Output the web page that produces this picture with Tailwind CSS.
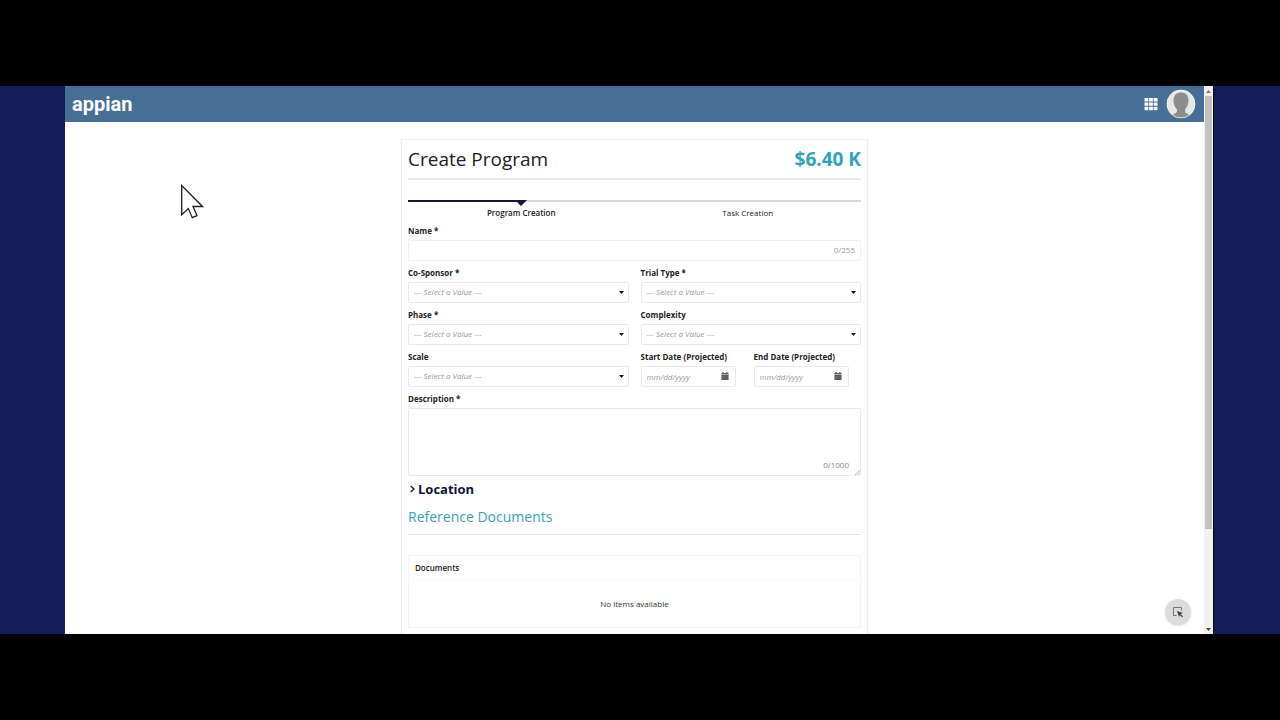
<!DOCTYPE html>
<html lang="en">
<head>
  <meta charset="UTF-8" />
  <meta name="viewport" content="width=device-width,initial-scale=1" />
  <title>Appian – Create Program</title>
  <script src="https://cdn.jsdelivr.net/npm/@tailwindcss/browser@4"></script>
</head>
<body class="h-screen flex flex-col bg-black py-[86px] font-['Open_Sans',sans-serif] text-[#222]">

  <div class="flex-1 min-h-0 flex bg-[#131d5a] pl-16 pr-[66px]">
    <div class="relative flex-1 min-w-0 flex overflow-hidden border-l border-l-[#131d5a] border-r border-r-black bg-white">

      <div class="flex-1 min-w-0 flex flex-col">
        <!-- NAV -->
        <header class="shrink-0 h-9 flex items-center justify-between bg-[#476f96] pl-[7px] pr-2">
          <a href="#" class="font-['Roboto',sans-serif] text-[20px] leading-6 font-bold text-white">appian</a>
          <div class="flex items-center gap-2">
            <button aria-label="Apps">
              <svg class="block w-[14px] h-[14px]" viewBox="0 0 14 14" fill="#fff">
                <path d="M.5 1h3.800v3.400H.5zM5.100 1h3.800v3.400H5.100zM9.700 1h3.800v3.400H9.700zM.5 5.400h3.800v3.400H.5zM5.100 5.400h3.800v3.400H5.100zM9.700 5.400h3.800v3.400H9.700zM.5 9.800h3.800v3.400H.5zM5.100 9.800h3.800v3.400H5.100zM9.700 9.800h3.800v3.400H9.700z"/>
              </svg>
            </button>
            <button aria-label="User menu">
              <svg class="block w-[30px] h-[30px]" viewBox="0 0 30 30">
                <defs><clipPath id="avatar"><circle cx="15" cy="15" r="13.6"/></clipPath></defs>
                <circle cx="15" cy="15" r="14.3" fill="#fff"/>
                <circle cx="15" cy="15" r="13.6" fill="#e4e6e8"/>
                <path clip-path="url(#avatar)" d="M15 3.600c4.900 0 7.700 3.200 7.500 8.200 0 3.600-1.400 6.500-3.400 8.400v2.200c0 1.300 2.600 2.200 4.600 3.600V30H6.300v-4c2-1.400 4.600-2.300 4.600-3.600v-2.200c-2-1.900-3.400-4.800-3.400-8.400-.2-5 2.600-8.200 7.500-8.200z" fill="#8d8d8d"/>
              </svg>
            </button>
          </div>
        </header>

        <!-- FORM -->
        <main class="flex-1 min-h-0 overflow-hidden px-4 pt-[17px]">
          <form class="mx-auto max-w-[467px] border border-[#ececec] px-[6px] pb-4 shadow-xs">
            <div class="flex items-center justify-between h-[38px]">
              <h1 class="text-[19px] leading-6">Create Program</h1>
              <p class="text-[19px] leading-6 font-bold text-[#2ea3bb]">$6.40 K</p>
            </div>
            <div class="h-[2px] bg-[#e8e8e8]"></div>

            <!-- milestone bar -->
            <div class="mt-5 relative h-[2px] bg-[#d9d9d9]">
              <div class="h-full w-1/4 bg-[#111638]"></div>
              <svg class="absolute left-1/4 top-0 -ml-[6px] w-3 h-[6px]" viewBox="0 0 12 6" fill="#111638"><path d="M0 0h12L6 6z"/></svg>
            </div>
            <ol class="mt-1 mb-[3px] grid grid-cols-2 text-center text-[8px] leading-[14px]">
              <li class="font-semibold">Program Creation</li>
              <li>Task Creation</li>
            </ol>

            <div class="grid grid-cols-2 gap-x-3 gap-y-1 text-[8px] leading-4">
              <div class="col-span-2">
                <label for="name" class="block mb-px font-bold">Name *</label>
                <div class="relative">
                  <input id="name" type="text" class="block w-full h-[21px] border border-[#f0f0f0] rounded-xs px-[5px]" />
                  <span class="absolute right-[6px] top-[2px] text-[#999]">0/255</span>
                </div>
              </div>

              <div>
                <label for="sponsor" class="block mb-px font-bold">Co-Sponsor *</label>
                <div class="relative">
                  <select id="sponsor" class="block w-full h-[21px] appearance-none border border-[#e9e9e9] rounded-xs px-[5px] pb-px italic text-[#999]"><option>--- Select a Value ---</option></select>
                  <svg class="absolute right-[5px] top-[9px] w-[5px] h-[3px] pointer-events-none" viewBox="0 0 5 3" fill="#111"><path d="M0 0h5L2.500 3z"/></svg>
                </div>
              </div>
              <div>
                <label for="trial" class="block mb-px font-bold">Trial Type *</label>
                <div class="relative">
                  <select id="trial" class="block w-full h-[21px] appearance-none border border-[#e9e9e9] rounded-xs px-[5px] pb-px italic text-[#999]"><option>--- Select a Value ---</option></select>
                  <svg class="absolute right-[5px] top-[9px] w-[5px] h-[3px] pointer-events-none" viewBox="0 0 5 3" fill="#111"><path d="M0 0h5L2.500 3z"/></svg>
                </div>
              </div>

              <div>
                <label for="phase" class="block mb-px font-bold">Phase *</label>
                <div class="relative">
                  <select id="phase" class="block w-full h-[21px] appearance-none border border-[#e9e9e9] rounded-xs px-[5px] pb-px italic text-[#999]"><option>--- Select a Value ---</option></select>
                  <svg class="absolute right-[5px] top-[9px] w-[5px] h-[3px] pointer-events-none" viewBox="0 0 5 3" fill="#111"><path d="M0 0h5L2.500 3z"/></svg>
                </div>
              </div>
              <div>
                <label for="complexity" class="block mb-px font-bold">Complexity</label>
                <div class="relative">
                  <select id="complexity" class="block w-full h-[21px] appearance-none border border-[#e9e9e9] rounded-xs px-[5px] pb-px italic text-[#999]"><option>--- Select a Value ---</option></select>
                  <svg class="absolute right-[5px] top-[9px] w-[5px] h-[3px] pointer-events-none" viewBox="0 0 5 3" fill="#111"><path d="M0 0h5L2.500 3z"/></svg>
                </div>
              </div>

              <div>
                <label for="scale" class="block mb-px font-bold">Scale</label>
                <div class="relative">
                  <select id="scale" class="block w-full h-[21px] appearance-none border border-[#e9e9e9] rounded-xs px-[5px] pb-px italic text-[#999]"><option>--- Select a Value ---</option></select>
                  <svg class="absolute right-[5px] top-[9px] w-[5px] h-[3px] pointer-events-none" viewBox="0 0 5 3" fill="#111"><path d="M0 0h5L2.500 3z"/></svg>
                </div>
              </div>
              <div class="flex gap-[18px]">
                <div class="w-[95px]">
                  <label for="start" class="block mb-px font-bold whitespace-nowrap">Start Date (Projected)</label>
                  <div class="relative">
                    <input id="start" type="text" placeholder="mm/dd/yyyy" class="block w-full h-[21px] border border-[#e9e9e9] rounded-xs px-[5px] pb-px placeholder:italic placeholder:text-[#999]" />
                    <svg class="absolute right-[7px] top-[6px] w-2 h-2" viewBox="0 0 8 8" fill="#5c5c5c"><path d="M1.500 0h1.200v.9h2.600V0h1.200v.9H7.600v1.300H.4V.9h1.100zM.4 2.700h7.200V8H.4z"/><path d="M1.500 4.400h5M1.500 6.200h5" stroke="#8a8a8a" stroke-width=".7" stroke-dasharray="1 1"/></svg>
                  </div>
                </div>
                <div class="w-[95px]">
                  <label for="end" class="block mb-px font-bold whitespace-nowrap">End Date (Projected)</label>
                  <div class="relative">
                    <input id="end" type="text" placeholder="mm/dd/yyyy" class="block w-full h-[21px] border border-[#e9e9e9] rounded-xs px-[5px] pb-px placeholder:italic placeholder:text-[#999]" />
                    <svg class="absolute right-[7px] top-[6px] w-2 h-2" viewBox="0 0 8 8" fill="#5c5c5c"><path d="M1.500 0h1.200v.9h2.600V0h1.200v.9H7.600v1.300H.4V.9h1.100zM.4 2.700h7.200V8H.4z"/><path d="M1.500 4.400h5M1.500 6.200h5" stroke="#8a8a8a" stroke-width=".7" stroke-dasharray="1 1"/></svg>
                  </div>
                </div>
              </div>

              <div class="col-span-2">
                <label for="description" class="block mb-px font-bold">Description *</label>
                <div class="relative">
                  <textarea id="description" class="block w-full h-[68px] resize-none border border-[#e9e9e9] rounded-xs px-[5px]"></textarea>
                  <span class="absolute right-3 bottom-[3px] text-[#888]">0/1000</span>
                  <svg class="absolute right-px bottom-px w-[5px] h-[5px]" viewBox="0 0 6 6" stroke="#888" stroke-width=".8"><path d="M0 6L6 0M3 6l3-3"/></svg>
                </div>
              </div>
            </div>

            <button type="button" class="mt-[3px] flex items-center gap-[3px] text-[13px] leading-5 font-bold text-[#111638]">
              <svg class="ml-0.5 w-[5px] h-2" viewBox="0 0 5 8" fill="none" stroke="#222" stroke-width="1.400"><path d="M.7 1l3.300 3-3.300 3"/></svg>
              Location
            </button>

            <h2 class="mt-2 pb-[7px] border-b border-[#e6e6e6] text-[14px] leading-5 text-[#3a9fb0]">Reference Documents</h2>

            <table class="mt-5 w-full border border-[#f5f5f5] text-[8px] leading-4">
              <thead>
                <tr class="border-b border-[#fafafa]"><th class="h-6 px-[6px] text-left font-semibold">Documents</th></tr>
              </thead>
              <tbody>
                <tr><td class="h-12 text-center text-[#333]">No items available</td></tr>
              </tbody>
            </table>
          </form>
        </main>
      </div>

      <!-- scroll track -->
      <div class="w-[9px] shrink-0 flex flex-col items-center bg-[#f1f1f1]">
        <svg class="h-[10px] w-[5px] shrink-0" viewBox="0 0 5 10" fill="#777"><path d="M0 7h5L2.500 4z"/></svg>
        <div class="w-[7px] h-[79%] bg-[#c1c1c1]"></div>
        <svg class="mt-auto h-[10px] w-[5px] shrink-0" viewBox="0 0 5 10" fill="#444"><path d="M0 4h5L2.500 7z"/></svg>
      </div>

      <button aria-label="Select element" class="absolute right-[22px] bottom-[9px] size-[26px] rounded-full bg-[#dcdcdc] shadow flex items-center justify-center">
        <svg class="w-3 h-3" viewBox="0 0 12 12"><path d="M4.500 9.500H1.500v-8h8v3" fill="none" stroke="#777" stroke-width="1"/><path d="M5 5l6 2-2.300 1L11 10.300l-.9.9L7.900 8.900 7 11z" fill="#444"/></svg>
      </button>

      <!-- pointer -->
      <svg class="absolute left-[115px] top-[98px] w-6 h-9" viewBox="0 0 24 36" fill="#fff" stroke="#222" stroke-width="1.300"><path d="M1.700 1.500v29.200l6.600-6.200 4 9.200 4.700-2-4-9.200h9.500z"/></svg>
    </div>
  </div>

</body>
</html>
